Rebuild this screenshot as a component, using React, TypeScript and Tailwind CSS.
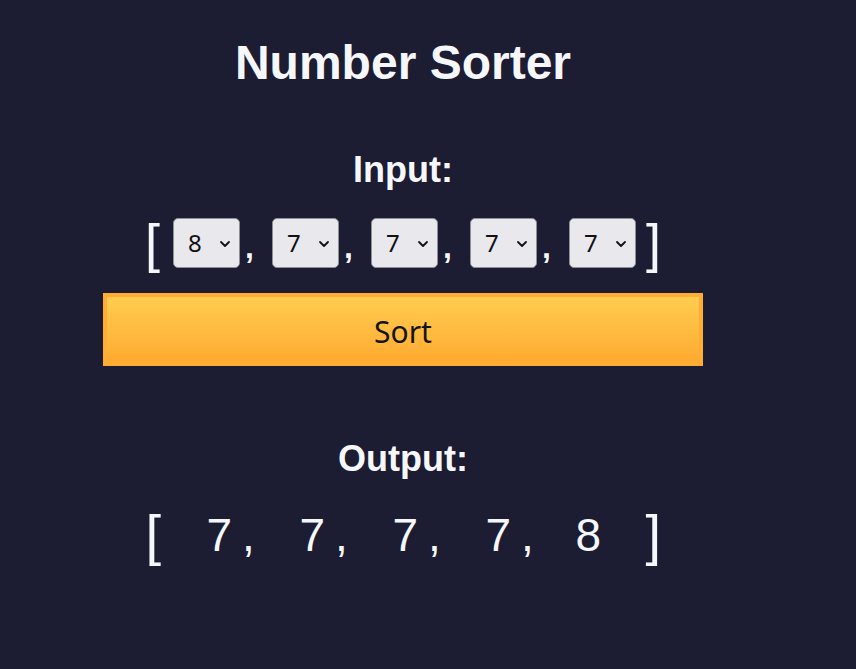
import { useState } from "react";

const sans = { fontFamily: '"Liberation Sans", Arial, sans-serif' };

function NumberSelect({ value, onChange }: { value: number; onChange: (v: number) => void }) {
  return (
    <div className="relative h-[50px] w-[67px]">
      <select
        value={value}
        onChange={(e) => onChange(Number(e.target.value))}
        className="h-full w-full appearance-none rounded-[5px] border border-[#8f8f98] bg-[#e9e8ed] pl-[14px] text-[24px] text-[#111] outline-none font-['Noto_Sans',sans-serif]"
      >
        {Array.from({ length: 10 }, (_, i) => (
          <option key={i} value={i}>
            {i}
          </option>
        ))}
      </select>
      <svg
        className="pointer-events-none absolute left-[46px] top-[22px]"
        width="12"
        height="8"
        viewBox="0 0 12 8"
        fill="none"
      >
        <path d="M2 2l4 4 4-4" stroke="#111" strokeWidth="1.8" strokeLinecap="round" strokeLinejoin="round" />
      </svg>
    </div>
  );
}

export default function App() {
  const [values, setValues] = useState<number[]>([8, 7, 7, 7, 7]);
  const [sorted, setSorted] = useState<number[]>([7, 7, 7, 7, 8]);

  const setAt = (i: number, v: number) => {
    setValues((prev) => prev.map((x, j) => (j === i ? v : x)));
  };

  return (
    <div className="min-h-[669px] w-full bg-[#1c1c32] text-[#f5f7fb]" style={sans}>
      <div className="flex w-[806px] flex-col items-center pt-[35px]">
        <h1 className="text-[48px] font-bold leading-[56px]">Number Sorter</h1>

        <h2 className="mt-[57px] text-[36px] font-bold leading-[44px]">Input:</h2>

        <div className="mt-[21px] flex h-[60px] items-center">
          <span className="w-[15px] text-[54px] font-light leading-none">[</span>
          <div className="ml-[13px] flex items-center">
            {values.map((v, i) => (
              <div key={i} className="flex items-center">
                <NumberSelect value={v} onChange={(nv) => setAt(i, nv)} />
                {i < values.length - 1 && (
                  <span className="w-[32px] pl-[5px] pt-[8px] text-[32px] font-bold leading-none">,</span>
                )}
              </div>
            ))}
          </div>
          <span className="ml-[10px] w-[15px] text-[54px] font-light leading-none">]</span>
        </div>

        <button
          onClick={() => setSorted([...values].sort((a, b) => a - b))}
          className="mt-[20px] h-[73px] w-[600px] border-4 border-[#ffad33] bg-linear-to-b from-[#ffcd50] to-[#ffaa30] pt-[3px] text-[30px] text-[#141414] font-['Noto_Sans',sans-serif]"
        >
          Sort
        </button>

        <h2 className="mt-[71px] text-[36px] font-bold leading-[44px]">Output:</h2>

        <div className="mt-[24px] flex h-[60px] items-center">
          <span className="w-[15px] text-[56px] font-light leading-none">[</span>
          <div className="ml-[46px] flex items-center text-[46px] leading-none">
            {sorted.map((n, i) =>
              i < sorted.length - 1 ? (
                <span key={i} className="flex w-[93px]">
                  <span>{n}</span>
                  <span className="ml-[10px]">,</span>
                </span>
              ) : (
                <span key={i} className="-ml-[3px] w-[70px]">
                  {n}
                </span>
              )
            )}
          </div>
          <span className="w-[15px] text-[56px] font-light leading-none">]</span>
        </div>
      </div>
    </div>
  );
}
